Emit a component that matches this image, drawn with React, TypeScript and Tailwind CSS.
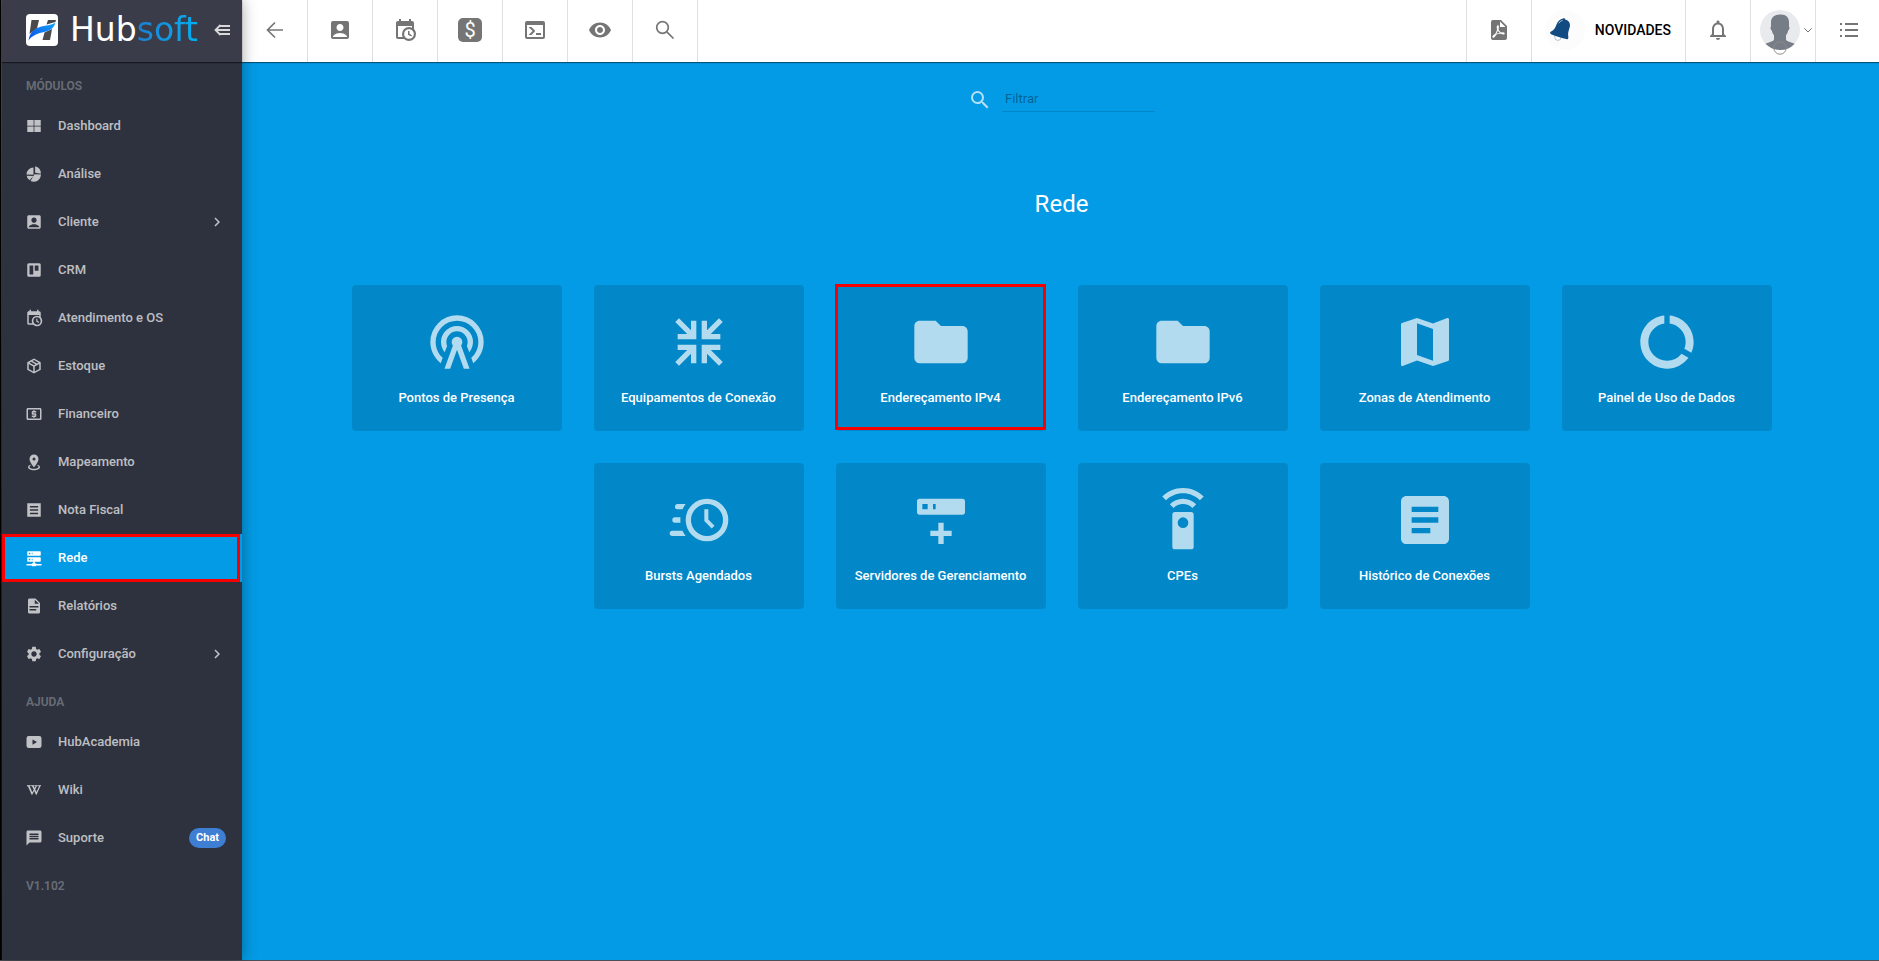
import type { ReactNode } from "react";
import { FaWikipediaW } from "react-icons/fa";
import { MdAccountBox, MdArticle, MdChevronRight, MdDataUsage, MdMap, MdMessage, MdNotificationsNone, MdSearch, MdSettings, MdVisibility } from "react-icons/md";

const paths = {
  tiles: "M3 4h8.5v7.5H3zM12.5 4H21v7.5h-8.5zM3 12.5h8.5V20H3zM12.5 12.5H21V20h-8.5z",
  pie: "M13.5 1.5v8.7l7.6 1.3a10 10 0 0 0-7.6-10M11.3 3.4A9.4 9.4 0 0 0 2 12.6l9.3.4zM2.2 14.2A9.4 9.4 0 0 0 6 20.3l5.3-5.8zM12.7 12.2 7.4 21.2a9.6 9.6 0 0 0 13.9-8.4z",
  trello: "M5 3h14a2 2 0 0 1 2 2v14a2 2 0 0 1-2 2H5a2 2 0 0 1-2-2V5a2 2 0 0 1 2-2M6 6v12h5V6zm7 0v7h5V6z",
  calendarClock:
    "M15,13H16.5V15.82L18.94,17.23L18.19,18.53L15,16.69V13M19,8H5V19H9.67C9.24,18.09 9,17.07 9,16A7,7 0 0,1 16,9C17.07,9 18.09,9.24 19,9.67V8M5,21C3.89,21 3,20.1 3,19V5C3,3.89 3.89,3 5,3H6V1H8V3H16V1H18V3H19A2,2 0 0,1 21,5V11.1C22.24,12.36 23,14.09 23,16A7,7 0 0,1 16,23C14.09,23 12.36,22.24 11.1,21H5M16,11.15A4.85,4.85 0 0,0 11.15,16C11.15,18.68 13.32,20.85 16,20.85A4.85,4.85 0 0,0 20.85,16C20.85,13.32 18.68,11.15 16,11.15Z",
  box: "M21,16.5C21,16.88 20.79,17.21 20.47,17.38L12.57,21.82C12.41,21.94 12.21,22 12,22C11.79,22 11.59,21.94 11.43,21.82L3.53,17.38C3.21,17.21 3,16.88 3,16.5V7.5C3,7.12 3.21,6.79 3.53,6.62L11.43,2.18C11.59,2.06 11.79,2 12,2C12.21,2 12.41,2.06 12.57,2.18L20.47,6.62C20.79,6.79 21,7.12 21,7.5V16.5M12,4.15L10.11,5.22L16,8.61L17.96,7.5L12,4.15M6.04,7.5L12,10.85L13.96,9.75L8.08,6.35L6.04,7.5M5,15.91L11,19.29V12.58L5,9.21V15.91M19,15.91V9.21L13,12.58V19.29L19,15.91Z",
  cash: "M20,18H4V6H20M20,4H4C2.89,4 2,4.89 2,6V18A2,2 0 0,0 4,20H20A2,2 0 0,0 22,18V6C22,4.89 21.1,4 20,4M11,17H13V16H14A1,1 0 0,0 15,15V12A1,1 0 0,0 14,11H11V10H15V8H13V7H11V8H10A1,1 0 0,0 9,9V12A1,1 0 0,0 10,13H13V14H9V16H11V17Z",
  marker:
    "M12,2C15.31,2 18,4.66 18,7.95C18,12.41 12,19 12,19C12,19 6,12.41 6,7.95C6,4.66 8.69,2 12,2M12,6A2,2 0 0,0 10,8A2,2 0 0,0 12,10A2,2 0 0,0 14,8A2,2 0 0,0 12,6M20,19C20,21.21 16.42,23 12,23C7.58,23 4,21.21 4,19C4,17.71 5.22,16.56 7.11,15.83L7.75,16.74C6.67,17.19 6,17.81 6,18.5C6,19.88 8.69,21 12,21C15.31,21 18,19.88 18,18.5C18,17.81 17.33,17.19 16.25,16.74L16.89,15.83C18.78,16.56 20,17.71 20,19Z",
  note: "M3 3h18v18H3zM6.5 6.5v2h11v-2zm0 4.5v2h11v-2zm0 4.5v2h11v-2z",
  network:
    "M13,19H14A1,1 0 0,1 15,20H22V22H15A1,1 0 0,1 14,23H10A1,1 0 0,1 9,22H2V20H9A1,1 0 0,1 10,19H11V17H4A1,1 0 0,1 3,16V12A1,1 0 0,1 4,11H20A1,1 0 0,1 21,12V16A1,1 0 0,1 20,17H13V19M4,3H20A1,1 0 0,1 21,4V8A1,1 0 0,1 20,9H4A1,1 0 0,1 3,8V4A1,1 0 0,1 4,3M9,7H10V5H9V7M9,15H10V13H9V15M5,5V7H7V5H5M5,13V15H7V13H5Z",
  file: "M13,9H18.5L13,3.5V9M6,2H14L20,8V20A2,2 0 0,1 18,22H6C4.89,22 4,21.1 4,20V4C4,2.89 4.89,2 6,2M15,18V16H6V18H15M18,14V12H6V14H18Z",
  video: "M5 4h14a3 3 0 0 1 3 3v10a3 3 0 0 1-3 3H5a3 3 0 0 1-3-3V7a3 3 0 0 1 3-3M10 8.5v7l6-3.5z",
  antenna:
    "M12,10A2,2 0 0,1 14,12C14,12.5 13.82,12.94 13.53,13.29L16.7,22H14.57L12,14.93L9.43,22H7.3L10.47,13.29C10.18,12.94 10,12.5 10,12A2,2 0 0,1 12,10M12,8A4,4 0 0,0 8,12C8,12.5 8.1,13 8.28,13.46L7.4,15.86C6.53,14.81 6,13.47 6,12A6,6 0 0,1 12,6A6,6 0 0,1 18,12C18,13.47 17.47,14.81 16.6,15.86L15.72,13.46C15.9,13 16,12.5 16,12A4,4 0 0,0 12,8M12,4A8,8 0 0,0 4,12C4,14.36 5,16.5 6.64,17.94L5.92,19.94C3.54,18.11 2,15.23 2,12A10,10 0 0,1 12,2A10,10 0 0,1 22,12C22,15.23 20.46,18.11 18.08,19.94L17.36,17.94C19,16.5 20,14.36 20,12A8,8 0 0,0 12,4Z",
  collapse:
    "M19.5,3.09L20.91,4.5L16.41,9H20V11H13V4H15V7.59L19.5,3.09M20.91,19.5L19.5,20.91L15,16.41V20H13V13H20V15H16.41L20.91,19.5M4.5,3.09L9,7.59V4H11V11H4V9H7.59L3.09,4.5L4.5,3.09M3.09,19.5L7.59,15H4V13H11V20H9V16.41L4.5,20.91L3.09,19.5Z",
  folder: "M10,4H4C2.89,4 2,4.89 2,6V18A2,2 0 0,0 4,20H20A2,2 0 0,0 22,18V8C22,6.89 21.1,6 20,6H12L10,4Z",
  clockFast:
    "M15,4A8,8 0 0,1 23,12A8,8 0 0,1 15,20A8,8 0 0,1 7,12A8,8 0 0,1 15,4M15,6A6,6 0 0,0 9,12A6,6 0 0,0 15,18A6,6 0 0,0 21,12A6,6 0 0,0 15,6M14,8H15.5V11.78L17.83,14.11L16.77,15.17L14,12.4V8M2,18A1,1 0 0,1 1,17A1,1 0 0,1 2,16H5.83C6.14,16.71 6.54,17.38 7,18H2M3,13A1,1 0 0,1 2,12A1,1 0 0,1 3,11H5.05L5,12L5.05,13H3M4,8A1,1 0 0,1 3,7A1,1 0 0,1 4,6H7C6.54,6.62 6.14,7.29 5.83,8H4Z",
  serverPlus:
    "M4,4H20A1,1 0 0,1 21,5V9A1,1 0 0,1 20,10H4A1,1 0 0,1 3,9V5A1,1 0 0,1 4,4M9,8H10V6H9V8M5,6V8H7V6H5M8,16H11V13H13V16H16V18H13V21H11V18H8V16Z",
  remote:
    "M12,0C8.96,0 6.21,1.23 4.22,3.22L5.63,4.63C7.26,3 9.5,2 12,2C14.5,2 16.74,3 18.36,4.64L19.77,3.23C17.79,1.23 15.04,0 12,0M7.05,6.05L8.46,7.46C9.37,6.56 10.62,6 12,6C13.38,6 14.63,6.56 15.54,7.46L16.95,6.05C15.68,4.78 13.93,4 12,4C10.07,4 8.32,4.78 7.05,6.05M12,15A2,2 0 0,1 10,13A2,2 0 0,1 12,11A2,2 0 0,1 14,13A2,2 0 0,1 12,15M15,9H9A1,1 0 0,0 8,10V22A1,1 0 0,0 9,23H15A1,1 0 0,0 16,22V10A1,1 0 0,0 15,9Z",
  pdf: "M13,9H18.5L13,3.5V9M6,2H14L20,8V20A2,2 0 0,1 18,22H6C4.89,22 4,21.1 4,20V4A2,2 0 0,1 6,2M10.93,12.44C11.34,13.34 11.86,14.08 12.46,14.59L12.87,14.91C12,15.07 10.8,15.35 9.53,15.84L9.42,15.88L9.92,14.84C10.37,13.97 10.7,13.18 10.93,12.44M17.41,16.25C17.59,16.07 17.68,15.84 17.69,15.59C17.72,15.39 17.67,15.2 17.57,15.04C17.28,14.57 16.53,14.35 15.29,14.35L14,14.42L13.13,13.84C12.5,13.32 11.93,12.41 11.53,11.28L11.57,11.14C11.9,9.81 12.21,8.2 11.55,7.54C11.39,7.38 11.17,7.3 10.94,7.3H10.7C10.33,7.3 10,7.69 9.91,8.07C9.54,9.4 9.76,10.13 10.13,11.34C9.88,12.23 9.56,13.25 9.05,14.28L8.09,16.08L7.2,16.57C6,17.32 5.43,18.16 5.32,18.69C5.28,18.88 5.3,19.05 5.37,19.23L5.4,19.28L5.88,19.59L6.32,19.7C7.13,19.7 8.05,18.75 9.29,16.63L9.47,16.56C10.5,16.23 11.78,16 13.5,15.81C14.53,16.32 15.74,16.55 16.5,16.55C16.94,16.55 17.24,16.44 17.41,16.25Z",
  terminal:
    "M20,19V7H4V19H20M20,3A2,2 0 0,1 22,5V19A2,2 0 0,1 20,21H4A2,2 0 0,1 2,19V5C2,3.89 2.9,3 4,3H20M13,17V15H18V17H13M9.58,13L5.57,9H8.4L11.7,12.3C12.09,12.69 12.09,13.33 11.7,13.72L8.42,17H5.59L9.58,13Z",
};

function Icon({ name }: { name: keyof typeof paths }) {
  return (
    <svg viewBox="0 0 24 24" width="1em" height="1em" fill="currentColor" fillRule="evenodd" aria-hidden="true">
      <path d={paths[name]} />
    </svg>
  );
}

type NavEntry = { label: string; icon: ReactNode; active?: boolean; expandable?: boolean; badge?: string };

const modules: NavEntry[] = [
  { label: "Dashboard", icon: <Icon name="tiles" /> },
  { label: "Análise", icon: <Icon name="pie" /> },
  { label: "Cliente", icon: <MdAccountBox />, expandable: true },
  { label: "CRM", icon: <Icon name="trello" /> },
  { label: "Atendimento e OS", icon: <Icon name="calendarClock" /> },
  { label: "Estoque", icon: <Icon name="box" /> },
  { label: "Financeiro", icon: <Icon name="cash" /> },
  { label: "Mapeamento", icon: <Icon name="marker" /> },
  { label: "Nota Fiscal", icon: <Icon name="note" /> },
  { label: "Rede", icon: <Icon name="network" />, active: true },
  { label: "Relatórios", icon: <Icon name="file" /> },
  { label: "Configuração", icon: <MdSettings />, expandable: true },
];

const help: NavEntry[] = [
  { label: "HubAcademia", icon: <Icon name="video" /> },
  { label: "Wiki", icon: <FaWikipediaW className="stroke-current stroke-[24] p-0.5" /> },
  { label: "Suporte", icon: <MdMessage />, badge: "Chat" },
];

const cards: { label: string; icon: ReactNode; marked?: boolean }[] = [
  { label: "Pontos de Presença", icon: <Icon name="antenna" /> },
  { label: "Equipamentos de Conexão", icon: <Icon name="collapse" /> },
  { label: "Endereçamento IPv4", icon: <Icon name="folder" />, marked: true },
  { label: "Endereçamento IPv6", icon: <Icon name="folder" /> },
  { label: "Zonas de Atendimento", icon: <MdMap /> },
  { label: "Painel de Uso de Dados", icon: <MdDataUsage /> },
  { label: "Bursts Agendados", icon: <Icon name="clockFast" /> },
  { label: "Servidores de Gerenciamento", icon: <Icon name="serverPlus" /> },
  { label: "CPEs", icon: <Icon name="remote" /> },
  { label: "Histórico de Conexões", icon: <MdArticle /> },
];

function LogoMark() {
  return (
    <svg viewBox="0 0 32 32" className="size-8 shrink-0" aria-hidden="true">
      <defs>
        <linearGradient id="swoosh" x1="0" y1="1" x2="1" y2="0">
          <stop offset="0" stopColor="#0a4df0" />
          <stop offset="1" stopColor="#14a5f5" />
        </linearGradient>
      </defs>
      <rect width="32" height="32" rx="4" fill="#fff" />
      <path d="M5.5 6H13l-2 8.5-7.5 5.5zM22 6h8l-.6 2L20.5 10.500zM18.500 18.500l7.500-3.500-2 11h-7.500z" fill="#4a4a4c" />
      <path d="M2.500 26.500C4 18 8 15 14 13c6-2 11-1.500 15.500-4.500C28 15 22.500 17 16 18.500 10 20 5.500 22 2.500 26.500z" fill="url(#swoosh)" />
    </svg>
  );
}

function NavItem({ item }: { item: NavEntry }) {
  return (
    <li>
      <a
        href="#"
        className={
          item.active
            ? "relative flex h-12 items-center gap-[15px] bg-[#039be5] pr-4 pl-[23px] text-[13px] font-medium text-white"
            : "flex h-12 items-center gap-[15px] pr-4 pl-[23px] text-[13px] font-medium text-white/70 hover:bg-white/5"
        }
      >
        <span className="text-[18px]">{item.icon}</span>
        <span className="flex-1 leading-5">{item.label}</span>
        {item.expandable && <MdChevronRight className="text-[18px]" />}
        {item.badge && (
          <span className="flex h-5 items-center rounded-full bg-[#3e7ed3] px-[7px] text-[11px] font-bold text-white">{item.badge}</span>
        )}
        {item.active && <span className="pointer-events-none absolute inset-y-0 right-0.5 left-0 border-[3px] border-[#f80000]" />}
      </a>
    </li>
  );
}

function NavHeading({ children }: { children: ReactNode }) {
  return <h2 className="flex h-10 items-center pt-2 pl-6 text-xs font-semibold text-white/30 uppercase">{children}</h2>;
}

function ToolButton({ label, children }: { label: string; children: ReactNode }) {
  return (
    <button
      type="button"
      aria-label={label}
      className="flex w-[65px] items-center justify-center border-r border-black/12 pb-0.5 text-2xl hover:bg-black/5"
    >
      {children}
    </button>
  );
}

export default function App() {
  return (
    <div className="overflow-x-hidden bg-[#039be5] font-[Roboto,sans-serif]">
      <div className="-mr-0.5 flex min-h-screen border-b border-[#4b4f57]">
        <div className="flex w-0.5 shrink-0">
          <div className="w-px bg-black" />
          <div className="w-px bg-linear-to-b from-[#c8203c] to-[#1c0206]" />
        </div>

        <aside className="z-20 w-60 shrink-0 bg-[#2d323e] shadow-[0_0_14px_rgba(0,0,0,0.35)]">
          <div className="flex h-[62px] items-center bg-[#3a3d49] pr-3 pb-0.5 pl-6 shadow-[0_1px_1px_rgba(0,0,0,0.5)]">
            <LogoMark />
            <a href="#" className="ml-3 flex-1 font-['DejaVu_Sans',sans-serif] text-[33px] leading-10 text-white">
              Hub<span className="bg-linear-to-r from-[#1b7fd0] to-[#00b0f4] bg-clip-text text-transparent">soft</span>
            </a>
            <button type="button" aria-label="Recolher menu" className="text-white/80">
              <svg viewBox="0 0 16 12" className="h-3 w-4" fill="none" stroke="currentColor" strokeWidth="1.8" aria-hidden="true">
                <path d="M6 2h10M2 6h14M6 10h10M6.500 1 1.500 6l5 5" />
              </svg>
            </button>
          </div>
          <nav>
            <NavHeading>Módulos</NavHeading>
            <ul>
              {modules.map((item) => (
                <NavItem key={item.label} item={item} />
              ))}
            </ul>
            <NavHeading>Ajuda</NavHeading>
            <ul>
              {help.map((item) => (
                <NavItem key={item.label} item={item} />
              ))}
            </ul>
            <NavHeading>v1.102</NavHeading>
          </nav>
        </aside>

        <div className="flex min-w-0 flex-1 flex-col">
          <header className="z-10 flex h-[62px] justify-between bg-white pl-px text-[#757575] shadow-[0_1px_1px_rgba(0,0,0,0.45)]">
            <div className="flex">
              <ToolButton label="Voltar">
                <svg viewBox="0 0 24 24" className="size-6" fill="none" stroke="currentColor" strokeWidth="1.7" aria-hidden="true">
                  <path d="M20 12H5M12 4.500 4.500 12l7.500 7.500" />
                </svg>
              </ToolButton>
              <ToolButton label="Clientes">
                <MdAccountBox />
              </ToolButton>
              <ToolButton label="Agenda">
                <Icon name="calendarClock" />
              </ToolButton>
              <ToolButton label="Financeiro">
                <span className="flex size-6 items-center justify-center rounded-[5px] bg-[#757575] text-xl leading-6 text-white">$</span>
              </ToolButton>
              <ToolButton label="Terminal">
                <Icon name="terminal" />
              </ToolButton>
              <ToolButton label="Visualizar">
                <MdVisibility />
              </ToolButton>
              <ToolButton label="Pesquisar">
                <svg viewBox="0 0 24 24" className="size-6" fill="none" stroke="currentColor" strokeWidth="1.7" aria-hidden="true">
                  <circle cx="9.5" cy="9.5" r="5.8" />
                  <path d="m13.800 13.800 6.700 6.700" />
                </svg>
              </ToolButton>
            </div>
            <div className="flex">
              <div className="w-px bg-black/12" />
              <ToolButton label="Relatórios em PDF">
                <Icon name="pdf" />
              </ToolButton>
              <button
                type="button"
                className="flex items-center gap-2.5 border-r border-black/12 pr-3.5 pb-0.5 pl-[13px] text-sm font-medium text-black hover:bg-black/5"
              >
                <svg viewBox="0 0 40 40" className="size-10" aria-hidden="true">
                  <circle cx="20" cy="20" r="20" fill="#fcfcfc" />
                  <g transform="translate(3 7) scale(1.04)">
                    <circle cx="9.500" cy="19.500" r="3" fill="#fff" stroke="#9db4cc" strokeWidth=".8" />
                    <path
                      d="M14.500 1.500c.8-.5 2 0 2 .8 3.500 1 5.300 3.500 4.500 7-.8 3.200-2.200 5.500-1.500 9.500.2 1.500 0 2.700-1 2.500C13 20 7.500 18.500 3 16.500c-1.500-.8-1.200-2 0-2.500 3-1.200 4.200-4 5.500-7.500C9.500 4 11.500 2.300 14.500 1.500z"
                      fill="#124a82"
                    />
                    <path d="M10.500 6c.8-1.500 2-2.300 3.500-2.700" fill="none" stroke="#dce7f2" strokeWidth=".8" />
                  </g>
                </svg>
                NOVIDADES
              </button>
              <ToolButton label="Notificações">
                <MdNotificationsNone />
              </ToolButton>
              <button type="button" aria-label="Conta" className="flex w-[65px] items-center gap-1 border-r border-black/12 pb-0.5 pl-[9px] hover:bg-black/5">
                <svg viewBox="0 0 40 46" className="mt-1.5 h-[46px] w-10" aria-hidden="true">
                  <circle cx="20" cy="20" r="20" fill="#e9eaee" />
                  <path
                    d="M20 4.500c5.500-.5 9 2.500 9 7.500v4.500c.8.300.6 3-.8 4-.5 2-1.200 3.500-2.200 4.700v4c0 2 5.500 3.300 8.700 4.500A20 20 0 0 1 20 40 20 20 0 0 1 5.500 33.800c3-1.300 8.500-2.600 8.500-4.600v-4c-1-1.200-1.700-2.700-2.200-4.700-1.400-1-1.600-3.700-.8-4V12c0-4.500 3.500-7.500 9-7.500z"
                    fill="#777d87"
                  />
                  <circle cx="20" cy="38" r="6.2" fill="none" stroke="#8a8a8a" />
                </svg>
                <svg viewBox="0 0 8 5" className="h-[5px] w-2" fill="none" stroke="currentColor" aria-hidden="true">
                  <path d="m.5.5 3.500 3.500L7.500.5" />
                </svg>
              </button>
              <button type="button" aria-label="Menu rápido" className="flex w-[65px] items-center justify-center pb-0.5 hover:bg-black/5">
                <svg viewBox="0 0 18 14" className="h-3.5 w-[18px]" fill="currentColor" aria-hidden="true">
                  <path d="M0 0h2v2H0zM5 0h13v2H5zM0 6h2v2H0zM5 6h13v2H5zM0 12h2v2H0zM5 12h13v2H5z" />
                </svg>
              </button>
            </div>
          </header>

          <main className="flex flex-1 flex-col items-center px-16 pt-[23px] text-white">
            <div className="flex items-end gap-2.5">
              <label htmlFor="filter" aria-label="Filtrar">
                <MdSearch className="text-2xl text-white/70" />
              </label>
              <input
                id="filter"
                type="text"
                placeholder="Filtrar"
                className="h-[27px] w-[153px] border-b border-black/12 bg-transparent px-[3px] text-[13px] outline-none placeholder:text-black/38"
              />
            </div>
            <h1 className="mt-[76px] text-2xl leading-8">Rede</h1>
            <div className="mt-[65px] flex max-w-[1500px] flex-wrap justify-center gap-8">
              {cards.map((card) => (
                <a
                  key={card.label}
                  href="#"
                  className="relative flex w-[210px] flex-col items-center gap-3.5 rounded-sm bg-black/12 pt-[25px] pb-[23px] hover:bg-black/20"
                >
                  <span className="text-[64px] text-white/70">{card.icon}</span>
                  <span className="text-[13px] leading-5 font-medium">{card.label}</span>
                  {card.marked && <span className="pointer-events-none absolute -top-px right-0 bottom-px -left-px border-[3px] border-[#f80000]" />}
                </a>
              ))}
            </div>
          </main>
        </div>
      </div>
    </div>
  );
}
